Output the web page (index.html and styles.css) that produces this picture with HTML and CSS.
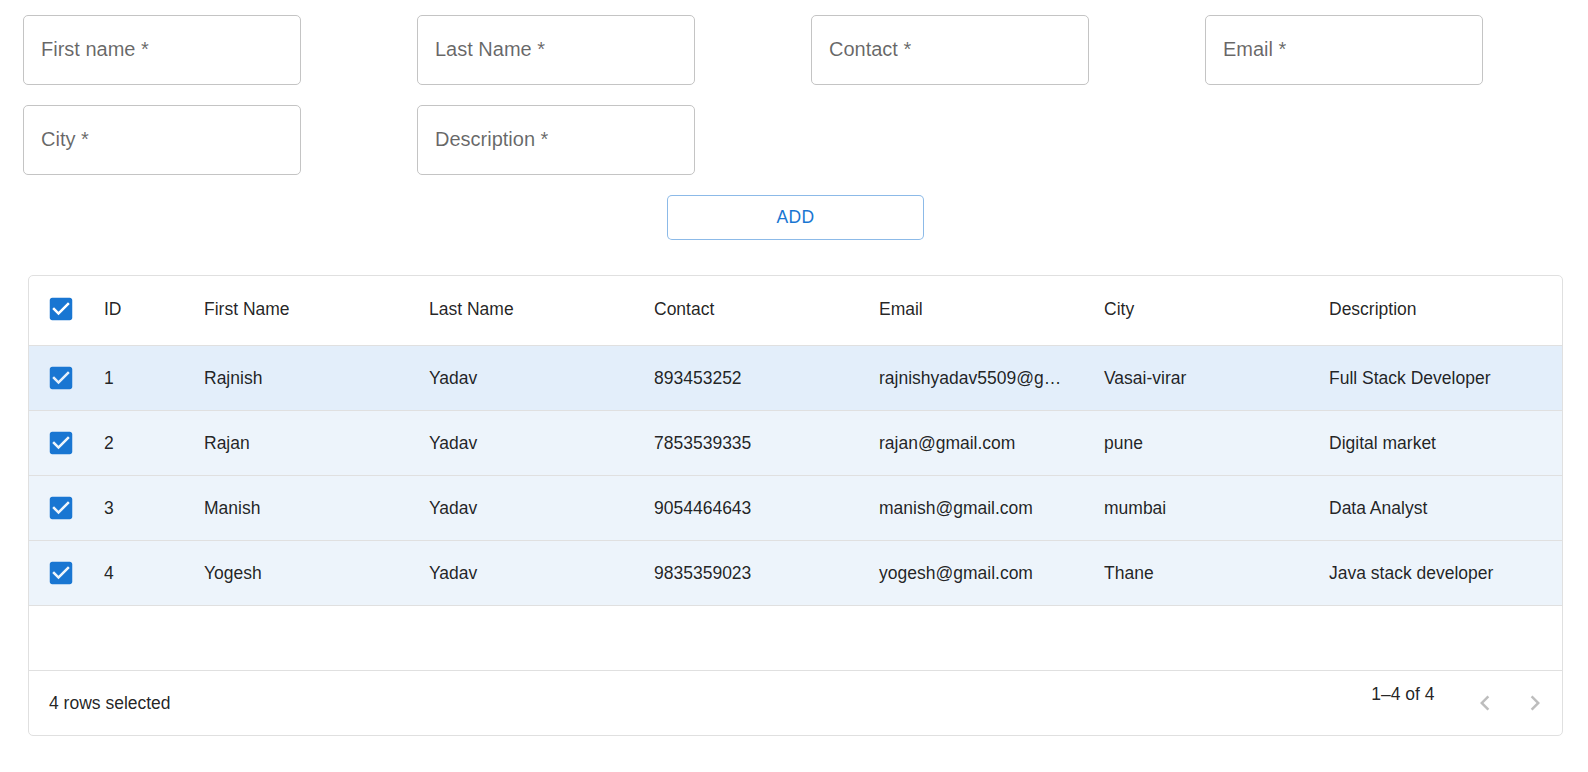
FILE: index.html
```html
<!DOCTYPE html>
<html lang="en">
<head>
<meta charset="utf-8">
<title>Users</title>
<link rel="stylesheet" href="styles.css">
</head>
<body>
<div class="page">
  <form class="form">
    <div class="fields">
      <div class="field"><span class="label">First name *</span></div>
      <div class="field"><span class="label">Last Name *</span></div>
      <div class="field"><span class="label">Contact *</span></div>
      <div class="field"><span class="label">Email *</span></div>
      <div class="field"><span class="label">City *</span></div>
      <div class="field"><span class="label">Description *</span></div>
    </div>
    <div class="actions">
      <button type="button" class="add-btn">ADD</button>
    </div>
  </form>

  <div class="grid">
    <div class="row head">
      <div class="cell check"><svg class="cb" viewBox="0 0 24 24"><path d="M19 3H5c-1.11 0-2 .9-2 2v14c0 1.1.89 2 2 2h14c1.11 0 2-.9 2-2V5c0-1.1-.89-2-2-2zm-9 14l-5-5 1.41-1.41L10 14.17l7.59-7.59L19 8l-9 9z"/></svg></div>
      <div class="cell">ID</div>
      <div class="cell">First Name</div>
      <div class="cell">Last Name</div>
      <div class="cell">Contact</div>
      <div class="cell">Email</div>
      <div class="cell">City</div>
      <div class="cell">Description</div>
      <div class="cell filler"></div>
    </div>

    <div class="row body hover">
      <div class="cell check"><svg class="cb" viewBox="0 0 24 24"><path d="M19 3H5c-1.11 0-2 .9-2 2v14c0 1.1.89 2 2 2h14c1.11 0 2-.9 2-2V5c0-1.1-.89-2-2-2zm-9 14l-5-5 1.41-1.41L10 14.17l7.59-7.59L19 8l-9 9z"/></svg></div>
      <div class="cell">1</div>
      <div class="cell">Rajnish</div>
      <div class="cell">Yadav</div>
      <div class="cell">893453252</div>
      <div class="cell email" title="rajnishyadav5509@gmail.com">rajnishyadav5509@g…</div>
      <div class="cell">Vasai-virar</div>
      <div class="cell">Full Stack Developer</div>
      <div class="cell filler"></div>
    </div>

    <div class="row body">
      <div class="cell check"><svg class="cb" viewBox="0 0 24 24"><path d="M19 3H5c-1.11 0-2 .9-2 2v14c0 1.1.89 2 2 2h14c1.11 0 2-.9 2-2V5c0-1.1-.89-2-2-2zm-9 14l-5-5 1.41-1.41L10 14.17l7.59-7.59L19 8l-9 9z"/></svg></div>
      <div class="cell">2</div>
      <div class="cell">Rajan</div>
      <div class="cell">Yadav</div>
      <div class="cell">7853539335</div>
      <div class="cell email">rajan@gmail.com</div>
      <div class="cell">pune</div>
      <div class="cell">Digital market</div>
      <div class="cell filler"></div>
    </div>

    <div class="row body">
      <div class="cell check"><svg class="cb" viewBox="0 0 24 24"><path d="M19 3H5c-1.11 0-2 .9-2 2v14c0 1.1.89 2 2 2h14c1.11 0 2-.9 2-2V5c0-1.1-.89-2-2-2zm-9 14l-5-5 1.41-1.41L10 14.17l7.59-7.59L19 8l-9 9z"/></svg></div>
      <div class="cell">3</div>
      <div class="cell">Manish</div>
      <div class="cell">Yadav</div>
      <div class="cell">9054464643</div>
      <div class="cell email">manish@gmail.com</div>
      <div class="cell">mumbai</div>
      <div class="cell">Data Analyst</div>
      <div class="cell filler"></div>
    </div>

    <div class="row body">
      <div class="cell check"><svg class="cb" viewBox="0 0 24 24"><path d="M19 3H5c-1.11 0-2 .9-2 2v14c0 1.1.89 2 2 2h14c1.11 0 2-.9 2-2V5c0-1.1-.89-2-2-2zm-9 14l-5-5 1.41-1.41L10 14.17l7.59-7.59L19 8l-9 9z"/></svg></div>
      <div class="cell">4</div>
      <div class="cell">Yogesh</div>
      <div class="cell">Yadav</div>
      <div class="cell">9835359023</div>
      <div class="cell email">yogesh@gmail.com</div>
      <div class="cell">Thane</div>
      <div class="cell">Java stack developer</div>
      <div class="cell filler"></div>
    </div>

    <div class="empty"></div>

    <div class="footer">
      <span class="selected">4 rows selected</span>
      <div class="pager">
        <span class="range">1–4 of 4</span>
        <div class="pager-actions">
          <span class="icon-btn"><svg viewBox="0 0 24 24"><path d="M15.41 16.59 10.83 12l4.58-4.59L14 6l-6 6 6 6 1.41-1.41z"/></svg></span>
          <span class="icon-btn"><svg viewBox="0 0 24 24"><path d="M8.59 16.59 13.17 12 8.59 7.41 10 6l6 6-6 6-1.41-1.41z"/></svg></span>
        </div>
      </div>
    </div>
  </div>
</div>
</body>
</html>
```

FILE: styles.css
```css
* { box-sizing: border-box; }

body {
  margin: 0;
  background: #fff;
  font-family: "Liberation Sans", Arial, sans-serif;
  color: rgba(0, 0, 0, 0.87);
}

.page {
  padding: 15px 25px 30px 0;
}

.form {
  margin: 0;
}

.fields {
  display: grid;
  grid-template-columns: repeat(4, 394px);
  row-gap: 20px;
  padding-left: 23px;
}

.field {
  width: 278px;
  height: 70px;
  border: 1px solid #c4c4c4;
  border-radius: 5px;
  display: flex;
  align-items: center;
  padding-left: 17px;
}

.label {
  font-size: 20px;
  line-height: 28px;
  color: rgba(0, 0, 0, 0.6);
  margin-top: -3px;
}

.actions {
  display: flex;
  justify-content: center;
  padding-left: 28px;
  margin-top: 20px;
}

.add-btn {
  width: 257px;
  height: 45px;
  background: #fff;
  border: 1px solid rgba(25, 118, 210, 0.5);
  border-radius: 5px;
  color: #1976d2;
  font-family: "Liberation Sans", Arial, sans-serif;
  font-size: 17.5px;
  letter-spacing: 0.3px;
  padding: 0;
}

.grid {
  margin: 35px 0 0 28px;
  border: 1px solid #e0e0e0;
  border-radius: 5px;
  font-size: 17.5px;
  overflow: hidden;
}

.row {
  display: grid;
  grid-template-columns: 62.5px 100px repeat(6, 225px) 1fr;
  border-bottom: 1px solid #e0e0e0;
}

.head {
  height: 70px;
}

.body {
  height: 65px;
  background: rgba(25, 118, 210, 0.08);
}

.body.hover {
  background: rgba(25, 118, 210, 0.12);
}

.cell {
  display: flex;
  align-items: center;
  padding: 0 12.5px;
  min-width: 0;
  overflow: hidden;
  white-space: nowrap;
}

.head .cell {
  padding-bottom: 2px;
}

.cell.check {
  justify-content: center;
  padding: 0 0 0 2px;
}

.head .cell.check {
  padding-bottom: 3px;
}

.cb {
  width: 30px;
  height: 30px;
  fill: #1976d2;
  display: block;
}

.body .cell:not(.check) {
  text-overflow: ellipsis;
  display: block;
  line-height: 64px;
}

.body .cell.email {
  padding-right: 12.5px;
}

.empty {
  height: 64px;
}

.footer {
  height: 65px;
  border-top: 1px solid #e0e0e0;
  display: flex;
  align-items: center;
  justify-content: space-between;
  padding: 0 2.5px 0 20px;
}

.selected {
  font-size: 17.5px;
  color: rgba(0, 0, 0, 0.87);
}

.pager {
  display: flex;
  align-items: center;
}

.range {
  font-size: 17.5px;
  margin-bottom: 18px;
}

.pager-actions {
  display: flex;
  margin-left: 25px;
}

.icon-btn {
  width: 50px;
  height: 50px;
  display: flex;
  align-items: center;
  justify-content: center;
}

.icon-btn svg {
  width: 30px;
  height: 30px;
  fill: rgba(0, 0, 0, 0.26);
}
```
